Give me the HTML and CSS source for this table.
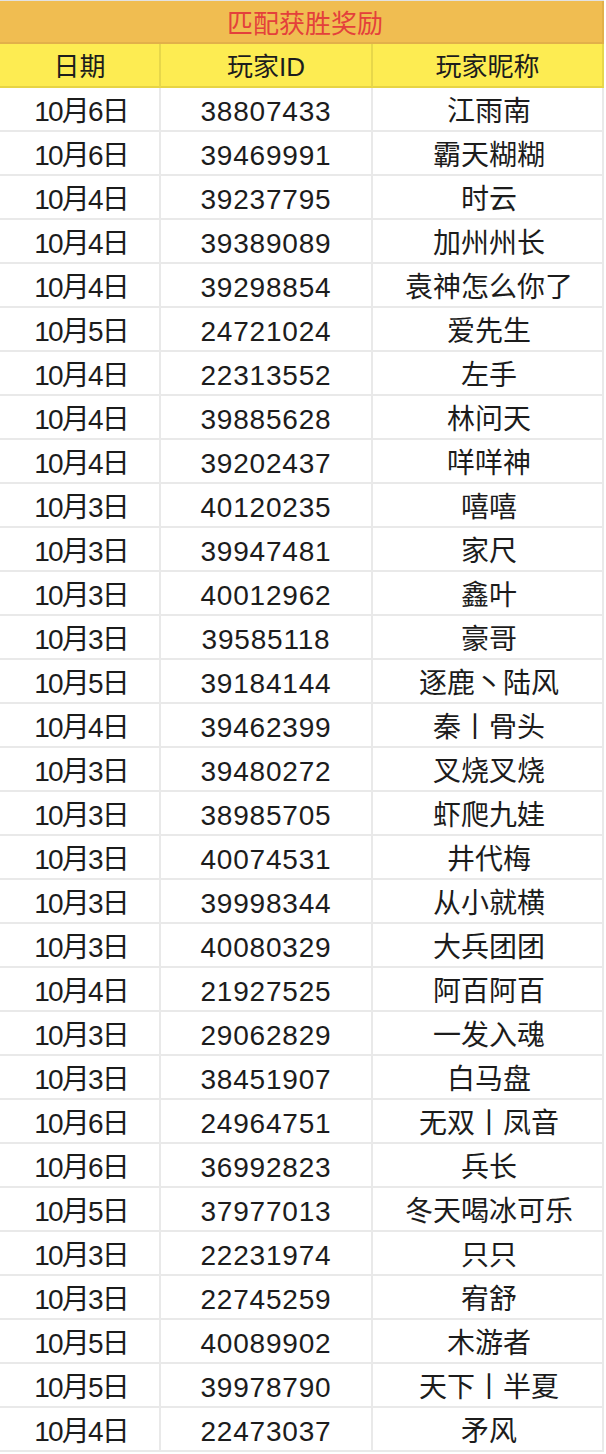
FILE: index.html
```html
<!DOCTYPE html>
<html lang="zh-CN">
<head>
<meta charset="utf-8">
<title>匹配获胜奖励</title>
<link rel="stylesheet" href="styles.css">
</head>
<body>
<div class="sheet">
  <div class="title">匹配获胜奖励</div>
  <div class="cell head">日期</div>
  <div class="cell head">玩家ID</div>
  <div class="cell head">玩家昵称</div>

  <div class="cell date">10月6日</div><div class="cell id">38807433</div><div class="cell name">江雨南</div>
  <div class="cell date">10月6日</div><div class="cell id">39469991</div><div class="cell name">霸天糊糊</div>
  <div class="cell date">10月4日</div><div class="cell id">39237795</div><div class="cell name">时云</div>
  <div class="cell date">10月4日</div><div class="cell id">39389089</div><div class="cell name">加州州长</div>
  <div class="cell date">10月4日</div><div class="cell id">39298854</div><div class="cell name">袁神怎么你了</div>
  <div class="cell date">10月5日</div><div class="cell id">24721024</div><div class="cell name">爱先生</div>
  <div class="cell date">10月4日</div><div class="cell id">22313552</div><div class="cell name">左手</div>
  <div class="cell date">10月4日</div><div class="cell id">39885628</div><div class="cell name">林问天</div>
  <div class="cell date">10月4日</div><div class="cell id">39202437</div><div class="cell name">咩咩神</div>
  <div class="cell date">10月3日</div><div class="cell id">40120235</div><div class="cell name">嘻嘻</div>
  <div class="cell date">10月3日</div><div class="cell id">39947481</div><div class="cell name">家尺</div>
  <div class="cell date">10月3日</div><div class="cell id">40012962</div><div class="cell name">鑫叶</div>
  <div class="cell date">10月3日</div><div class="cell id">39585118</div><div class="cell name">豪哥</div>
  <div class="cell date">10月5日</div><div class="cell id">39184144</div><div class="cell name">逐鹿丶陆风</div>
  <div class="cell date">10月4日</div><div class="cell id">39462399</div><div class="cell name">秦丨骨头</div>
  <div class="cell date">10月3日</div><div class="cell id">39480272</div><div class="cell name">叉烧叉烧</div>
  <div class="cell date">10月3日</div><div class="cell id">38985705</div><div class="cell name">虾爬九娃</div>
  <div class="cell date">10月3日</div><div class="cell id">40074531</div><div class="cell name">井代梅</div>
  <div class="cell date">10月3日</div><div class="cell id">39998344</div><div class="cell name">从小就横</div>
  <div class="cell date">10月3日</div><div class="cell id">40080329</div><div class="cell name">大兵团团</div>
  <div class="cell date">10月4日</div><div class="cell id">21927525</div><div class="cell name">阿百阿百</div>
  <div class="cell date">10月3日</div><div class="cell id">29062829</div><div class="cell name">一发入魂</div>
  <div class="cell date">10月3日</div><div class="cell id">38451907</div><div class="cell name">白马盘</div>
  <div class="cell date">10月6日</div><div class="cell id">24964751</div><div class="cell name">无双丨凤音</div>
  <div class="cell date">10月6日</div><div class="cell id">36992823</div><div class="cell name">兵长</div>
  <div class="cell date">10月5日</div><div class="cell id">37977013</div><div class="cell name">冬天喝冰可乐</div>
  <div class="cell date">10月3日</div><div class="cell id">22231974</div><div class="cell name">只只</div>
  <div class="cell date">10月3日</div><div class="cell id">22745259</div><div class="cell name">宥舒</div>
  <div class="cell date">10月5日</div><div class="cell id">40089902</div><div class="cell name">木游者</div>
  <div class="cell date">10月5日</div><div class="cell id">39978790</div><div class="cell name">天下丨半夏</div>
  <div class="cell date">10月4日</div><div class="cell id">22473037</div><div class="cell name">矛风</div>
</div>
</body>
</html>
```

FILE: styles.css
```css
html, body {
  margin: 0;
  padding: 0;
  background: #ffffff;
}

.sheet {
  display: grid;
  grid-template-columns: 161px 212px 231px;
  width: 604px;
  border-top: 1px solid #e2e2e2;
  font-family: "Liberation Sans", "Noto Sans CJK SC", sans-serif;
  color: #1c1c1c;
}

.title {
  grid-column: 1 / -1;
  box-sizing: border-box;
  height: 43px;
  padding-top: 6px;
  padding-left: 8px;
  line-height: 35px;
  background: #f0bd51;
  border-bottom: 2px solid #e2b04a;
  border-right: 2px solid #e2b04a;
  color: #e4403b;
  font-size: 26px;
  text-align: center;
}

.cell {
  box-sizing: border-box;
  height: 44px;
  padding-top: 6px;
  line-height: 36px;
  border-right: 2px solid rgba(0, 0, 0, 0.085);
  border-bottom: 2px solid rgba(0, 0, 0, 0.085);
  text-align: center;
  font-size: 28px;
  white-space: nowrap;
  overflow: hidden;
}

.head {
  background: #fdec52;
  font-size: 26px;
  padding-top: 5px;
  line-height: 37px;
  border-bottom-color: rgba(120, 90, 0, 0.16);
}

.date {
  letter-spacing: -1.8px;
  padding-left: 3px;
}

.id {
  letter-spacing: 0.8px;
}

.name {
  padding-left: 3px;
}
```
